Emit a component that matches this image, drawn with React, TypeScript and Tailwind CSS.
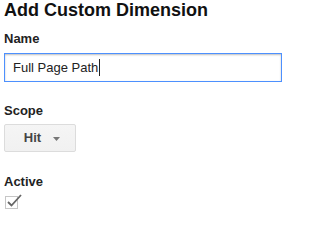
const Label = ({ children, className = '' }: { children: React.ReactNode; className?: string }) => (
  <div className={`text-[13px] font-bold leading-[15px] text-[#222] ${className}`}>{children}</div>
);

const App = () => {
  return (
    <div className="w-[288px] h-[215px] bg-white px-[4px] font-['Liberation_Sans',Arial,sans-serif] flex flex-col overflow-hidden">
      <h1 className="text-[18px] font-bold leading-[21px] text-[#111]">Add Custom Dimension</h1>

      <Label className="mt-[10px]">Name</Label>
      <div className="mt-[7px] w-[278px] h-[29px] border border-[#4d90fe] shadow-[inset_0_1px_2px_rgba(0,0,0,0.25)] flex items-center pl-[8px]">
        <span className="text-[13px] text-[#222] leading-[15px]">Full Page Path</span>
        <span className="w-px h-[17px] bg-[#222] ml-px" />
      </div>

      <Label className="mt-[21px]">Scope</Label>
      <button className="mt-[6px] w-[72px] h-[28px] rounded-[2px] border border-[#dcdcdc] bg-gradient-to-b from-[#f5f5f5] to-[#f1f1f1] flex items-center justify-center gap-[12px] pl-[4px] text-[13px] font-bold text-[#444]">
        <span>Hit</span>
        <svg width="7" height="4" viewBox="0 0 7 4" className="mt-px">
          <path d="M0 0h7L3.5 4z" fill="#777" />
        </svg>
      </button>

      <Label className="mt-[22px]">Active</Label>
      <div className="mt-[7px] ml-[1px] relative w-[13px] h-[13px] border border-[#c6c6c6] bg-white">
        <svg width="15" height="13" viewBox="0 0 15 13" className="absolute -top-[3px] left-[1px]">
          <path d="M1 8l3.5 3.5L14 1" fill="none" stroke="#666" strokeWidth="1.8" />
        </svg>
      </div>
    </div>
  );
};

export default App;
